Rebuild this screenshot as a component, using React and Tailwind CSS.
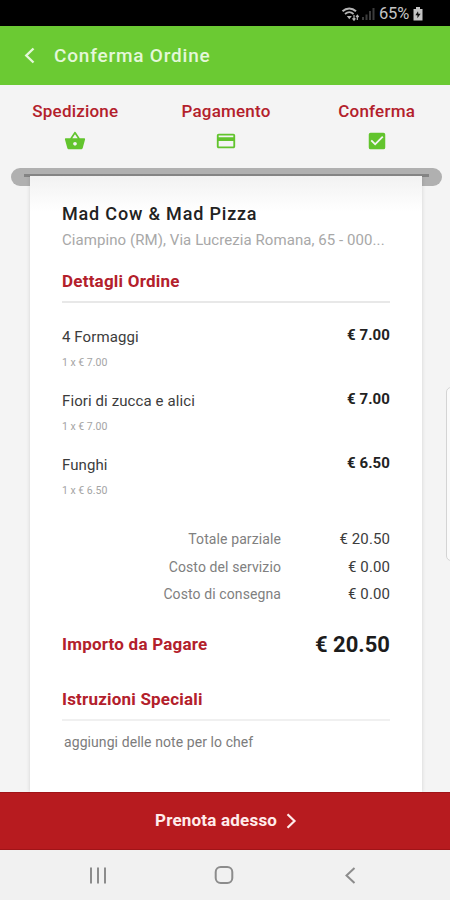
import React from "react";
import { MdCheckBox, MdCreditCard, MdShoppingBasket } from "react-icons/md";

const pasos = [
  { nombre: "Spedizione", Icono: MdShoppingBasket },
  { nombre: "Pagamento", Icono: MdCreditCard },
  { nombre: "Conferma", Icono: MdCheckBox },
];

const platos = [
  { nombre: "4 Formaggi", cantidad: "1 x € 7.00", precio: "€ 7.00" },
  { nombre: "Fiori di zucca e alici", cantidad: "1 x € 7.00", precio: "€ 7.00" },
  { nombre: "Funghi", cantidad: "1 x € 6.50", precio: "€ 6.50" },
];

const totales = [
  { etiqueta: "Totale parziale", valor: "€ 20.50" },
  { etiqueta: "Costo del servizio", valor: "€ 0.00" },
  { etiqueta: "Costo di consegna", valor: "€ 0.00" },
];

const BarraEstado = () => (
  <div className="flex h-[26px] shrink-0 items-center bg-black pt-[1px] pl-[341px] text-[#b4b4b4]">
    <svg className="h-[16px] w-[19px]" viewBox="0 0 19 16" fill="none" stroke="currentColor">
      <path d="M1.5 5.2C5.5 1.5 11 1.5 15 5.2" strokeWidth="2" />
      <path d="M4 8C6.8 5.6 9.8 5.6 12.6 8" strokeWidth="1.8" />
      <path d="M5.8 10h5l-2.5 3.2z" fill="currentColor" stroke="none" />
      <path d="M13 9v5M11.5 12.3l1.5 1.9 1.4-1.9M16.3 14V9.5M15 11l1.3-1.7 1.4 1.7" strokeWidth="1.2" />
    </svg>
    <svg className="ml-[2px] h-[13px] w-[13px]" viewBox="0 0 13 13" fill="#3c3c3c">
      <path d="M0 10h2v3H0zM3.5 7.5h2V13h-2zM7 4h2v9H7zM10.5 1h2v12h-2z" />
    </svg>
    <span className="mt-[2px] ml-[4px] w-[32px] text-[16.5px] leading-none tracking-[-0.2px] whitespace-nowrap text-[#c4c4c4]">
      65%
    </span>
    <svg className="ml-[2px] h-[14px] w-[10px]" viewBox="0 0 10 14">
      <path d="M3 0h4v2h2.5v11.5h-9V2H3z" fill="#c4c4c4" />
      <path d="M5 4.3 2.4 8.2h2v3l3.2-4.4H5.4z" fill="#111" />
    </svg>
  </div>
);

const Encabezado = () => (
  <header className="flex h-[59px] shrink-0 items-center bg-[#6bca33] pl-[24px] text-[#e4f7d9]">
    <svg className="h-[17px] w-[11px]" viewBox="0 0 11 17" fill="none" stroke="currentColor" strokeWidth="2.4">
      <path d="M9.5 1.5 2.3 8.5l7.2 7" />
    </svg>
    <h1 className="mt-[1px] ml-[19px] text-[19px] font-medium tracking-[0.8px]">Conferma Ordine</h1>
  </header>
);

const Pasos = () => (
  <nav className="-mr-[2px] grid h-[83px] shrink-0 grid-cols-3 pt-[14px]">
    {pasos.map(({ nombre, Icono }) => (
      <div key={nombre} className="flex flex-col items-center">
        <span className="text-[17px] leading-6 font-medium tracking-[0.2px] text-[#b3202b]">{nombre}</span>
        <Icono className="mt-[7px] h-[22px] w-[22px] text-[#62c42d]" />
      </div>
    ))}
  </nav>
);

const Plato = ({ nombre, cantidad, precio }) => (
  <li className="flex h-16 justify-between">
    <div>
      <p className="text-[15px] leading-6 tracking-[0.1px] text-[#3c3c3c]">{nombre}</p>
      <p className="mt-[4px] text-[10.5px] leading-5 text-[#a4a4a4]">{cantidad}</p>
    </div>
    <span className="-mt-[2px] text-[15px] leading-6 font-bold tracking-[0.1px] text-[#222]">{precio}</span>
  </li>
);

const Recibo = () => (
  <section className="mx-[30px] w-[392px] grow bg-white bg-linear-to-b from-[#f2f2f2] to-white to-[36px] px-8 pt-[26px] shadow-[0_0_4px_rgba(0,0,0,0.14)]">
    <h2 className="text-[18px] leading-6 font-medium tracking-[0.82px] text-[#222]">Mad Cow &amp; Mad Pizza</h2>
    <p className="mt-[2px] text-[15px] leading-6 tracking-[0.07px] whitespace-nowrap text-[#a8a8a8]">
      Ciampino (RM), Via Lucrezia Romana, 65 - 000...
    </p>
    <h3 className="mt-[17px] text-[17px] leading-6 font-bold tracking-[0.22px] text-[#b3202b]">Dettagli Ordine</h3>
    <div className="mt-[8px] h-[2px] bg-[#e8e8e8]" />

    <ul className="mt-[22px]">
      {platos.map((plato) => (
        <Plato key={plato.nombre} {...plato} />
      ))}
    </ul>

    <dl className="mt-[10px] text-right">
      {totales.map(({ etiqueta, valor }) => (
        <div key={etiqueta} className="flex h-[27.7px] justify-end">
          <dt className="text-[14px] leading-6 tracking-[0.1px] text-[#808080]">{etiqueta}</dt>
          <dd className="w-[109px] text-[15px] leading-6 tracking-[0.1px] text-[#3c3c3c]">{valor}</dd>
        </div>
      ))}
    </dl>

    <div className="mt-[23px] flex h-6 items-center justify-between">
      <h3 className="text-[17px] font-bold tracking-[0.22px] text-[#b3202b]">Importo da Pagare</h3>
      <span className="-mt-[2px] text-[22px] font-bold text-[#1c1c1c]">€ 20.50</span>
    </div>
    <h3 className="mt-[30px] text-[17px] leading-6 font-bold tracking-[0.2px] text-[#b3202b]">Istruzioni Speciali</h3>
    <div className="mt-[8px] h-[2px] bg-[#f0f0f0]" />
    <p className="mt-[9px] ml-[2px] text-[14px] leading-6 tracking-[0.08px] text-[#7c7c7c]">
      aggiungi delle note per lo chef
    </p>
  </section>
);

export default function App() {
  return (
    <div className="relative flex h-[900px] w-[450px] flex-col overflow-hidden bg-[#f4f4f4] font-['Roboto',sans-serif]">
      <BarraEstado />
      <Encabezado />
      <Pasos />
      {/* ranura de la impresora por donde sale el recibo */}
      <div className="mr-[8px] ml-[11px] h-[18px] shrink-0 rounded-full bg-[#b0b0b0] px-[13px] pt-[6px]">
        <div className="h-[3px] bg-[#848484]" />
      </div>
      <div className="relative -mt-[10px] flex min-h-0 grow flex-col overflow-hidden">
        <Recibo />
      </div>
      <button className="flex h-[58px] shrink-0 items-center border-y border-[#a01418] bg-[#b71b1f] pl-[155px] text-[#ffeceb]">
        <span className="text-[17px] font-bold tracking-[0.2px]">Prenota adesso</span>
        <svg className="-mt-[1px] ml-[9px] h-[16px] w-[11px]" viewBox="0 0 11 16" fill="none" stroke="currentColor" strokeWidth="2.2">
          <path d="m1.5 1.2 7 6.8-7 6.8" />
        </svg>
      </button>
      <div className="flex h-[50px] shrink-0 items-center bg-[#f1f1f1] pl-[89px] text-[#8c8c8c]">
        <svg className="h-[17px] w-[18px]" viewBox="0 0 18 17" fill="none" stroke="currentColor" strokeWidth="2">
          <path d="M2 .5v16M9 .5v16M16 .5v16" />
        </svg>
        <svg className="ml-[107px] h-[20px] w-[20px]" viewBox="0 0 20 20" fill="none" stroke="currentColor" strokeWidth="2">
          <rect x="1.7" y="2" width="16.6" height="16" rx="5" />
        </svg>
        <svg className="ml-[110px] h-[17px] w-[12px]" viewBox="0 0 12 17" fill="none" stroke="currentColor" strokeWidth="2">
          <path d="M10.5 1 2.5 8.5l8 7.5" />
        </svg>
      </div>
      {/* tirador del panel lateral */}
      <div className="absolute top-[387px] -right-[7px] h-[174px] w-[11px] rounded-l-[5px] border border-[#d4d4d4] bg-[#fafafa]" />
    </div>
  );
}
